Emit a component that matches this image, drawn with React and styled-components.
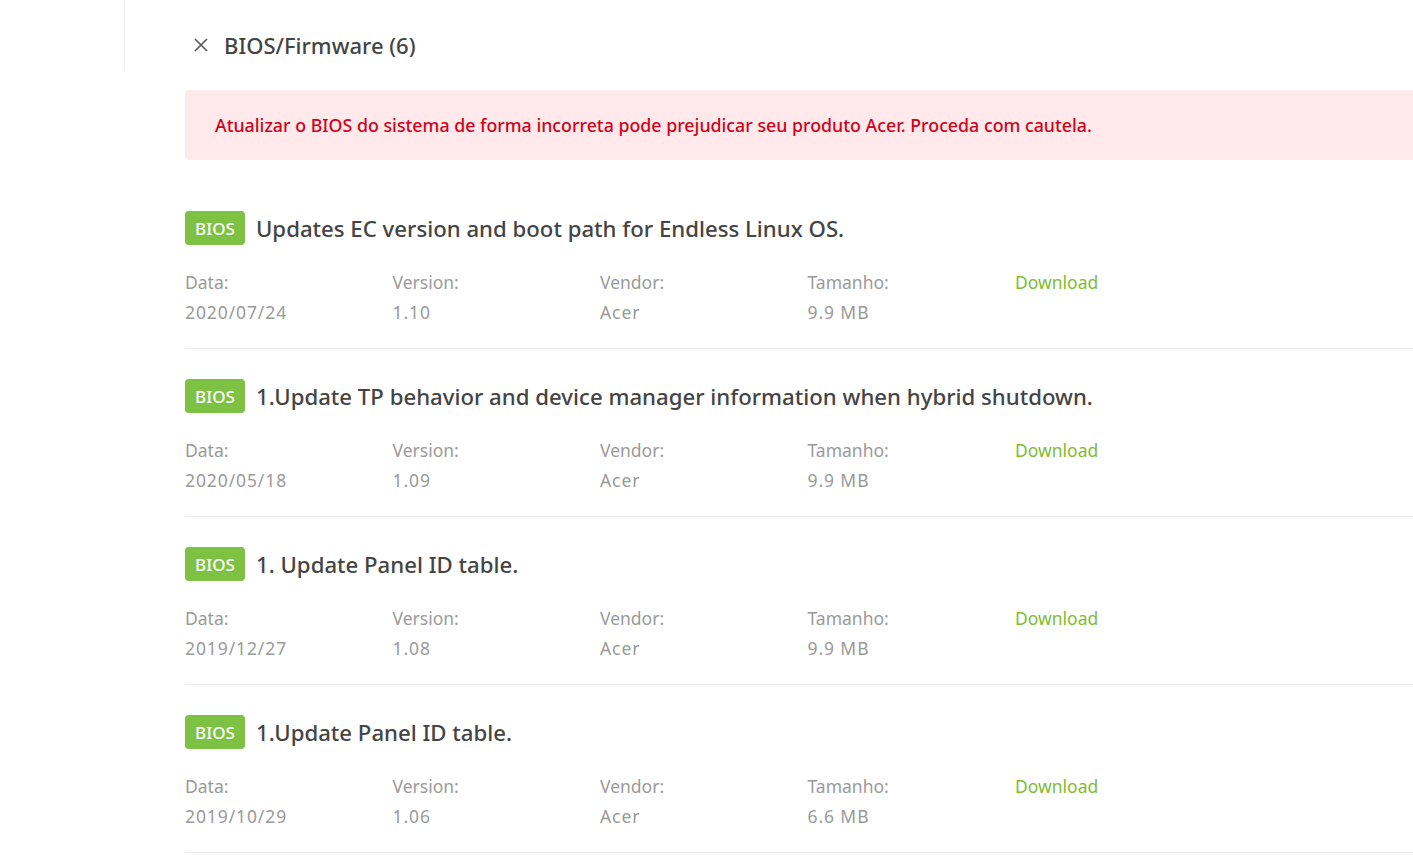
import React from "react";
import styled, { createGlobalStyle } from "styled-components";

const GlobalStyle = createGlobalStyle`
  body {
    margin: 0;
    background: #fff;
    font-family: "Noto Sans", "Open Sans", sans-serif;
    overflow: hidden;
  }
`;

const items = [
  { title: "Updates EC version and boot path for Endless Linux OS.", date: "2020/07/24", version: "1.10", vendor: "Acer", size: "9.9 MB" },
  { title: "1.Update TP behavior and device manager information when hybrid shutdown.", date: "2020/05/18", version: "1.09", vendor: "Acer", size: "9.9 MB" },
  { title: "1. Update Panel ID table.", date: "2019/12/27", version: "1.08", vendor: "Acer", size: "9.9 MB" },
  { title: "1.Update Panel ID table.", date: "2019/10/29", version: "1.06", vendor: "Acer", size: "6.6 MB" },
];

const Page = styled.div`
  display: flex;
  align-items: flex-start;
  width: 1500px;
`;

const Sidebar = styled.div`
  width: 124px;
  height: 71px;
  border-right: 1px solid #eeeeee;
  flex-shrink: 0;
`;

const Main = styled.div`
  flex: 1;
  padding-left: 60px;
`;

const Header = styled.div`
  display: flex;
  align-items: center;
  height: 89px;
  padding-left: 9px;
  gap: 16px;
`;

const Title = styled.h2`
  margin: 0;
  font-size: 22px;
  font-weight: 500;
  color: #444;
`;

const Alert = styled.div`
  background: #ffe9ea;
  color: #d0021b;
  border-radius: 4px 0 0 4px;
  height: 70px;
  margin-top: 1px;
  display: flex;
  align-items: center;
  padding-left: 30px;
  font-size: 17.8px;
  font-weight: 500;
  margin-bottom: 21px;
`;

const Item = styled.div`
  border-bottom: 1px solid #e8e8e8;
  padding: 30px 0 25px;
`;

const ItemHead = styled.div`
  display: flex;
  align-items: center;
  gap: 11px;
`;

const Badge = styled.span`
  background: #7dc242;
  color: #fff;
  border-radius: 4px;
  width: 60px;
  height: 34px;
  display: inline-flex;
  align-items: center;
  justify-content: center;
  font-size: 17px;
  font-weight: 500;
`;

const ItemTitle = styled.h3`
  margin: 0;
  font-size: 22.2px;
  font-weight: 500;
  color: #444;
`;

const Meta = styled.div`
  display: grid;
  grid-template-columns: repeat(5, 207.5px);
  margin-top: 26px;
`;

const Cell = styled.div`
  display: flex;
  flex-direction: column;
  gap: 8px;
  font-size: 17.5px;
  line-height: 22px;
`;

const Label = styled.span`
  color: #9a9a9a;
`;

const Value = styled.span`
  color: #9a9a9a;
  letter-spacing: 0.9px;
`;

const DownloadLink = styled.a`
  color: #80bc2f;
  text-decoration: none;
  font-size: 17.5px;
  line-height: 22px;
`;

const CloseIcon = () => (
  <svg width="14" height="14" viewBox="0 0 14 14">
    <path d="M1 1 L13 13 M13 1 L1 13" stroke="#555" strokeWidth="1.6" />
  </svg>
);

export default function App() {
  return (
    <>
      <GlobalStyle />
      <Page>
        <Sidebar />
        <Main>
          <Header>
            <CloseIcon />
            <Title>BIOS/Firmware (6)</Title>
          </Header>
          <Alert>
            Atualizar o BIOS do sistema de forma incorreta pode prejudicar seu produto Acer. Proceda com cautela.
          </Alert>
          {items.map((it) => (
            <Item key={it.date}>
              <ItemHead>
                <Badge>BIOS</Badge>
                <ItemTitle>{it.title}</ItemTitle>
              </ItemHead>
              <Meta>
                <Cell>
                  <Label>Data:</Label>
                  <Value>{it.date}</Value>
                </Cell>
                <Cell>
                  <Label>Version:</Label>
                  <Value>{it.version}</Value>
                </Cell>
                <Cell>
                  <Label>Vendor:</Label>
                  <Value>{it.vendor}</Value>
                </Cell>
                <Cell>
                  <Label>Tamanho:</Label>
                  <Value>{it.size}</Value>
                </Cell>
                <Cell>
                  <DownloadLink href="#">Download</DownloadLink>
                </Cell>
              </Meta>
            </Item>
          ))}
        </Main>
      </Page>
    </>
  );
}
